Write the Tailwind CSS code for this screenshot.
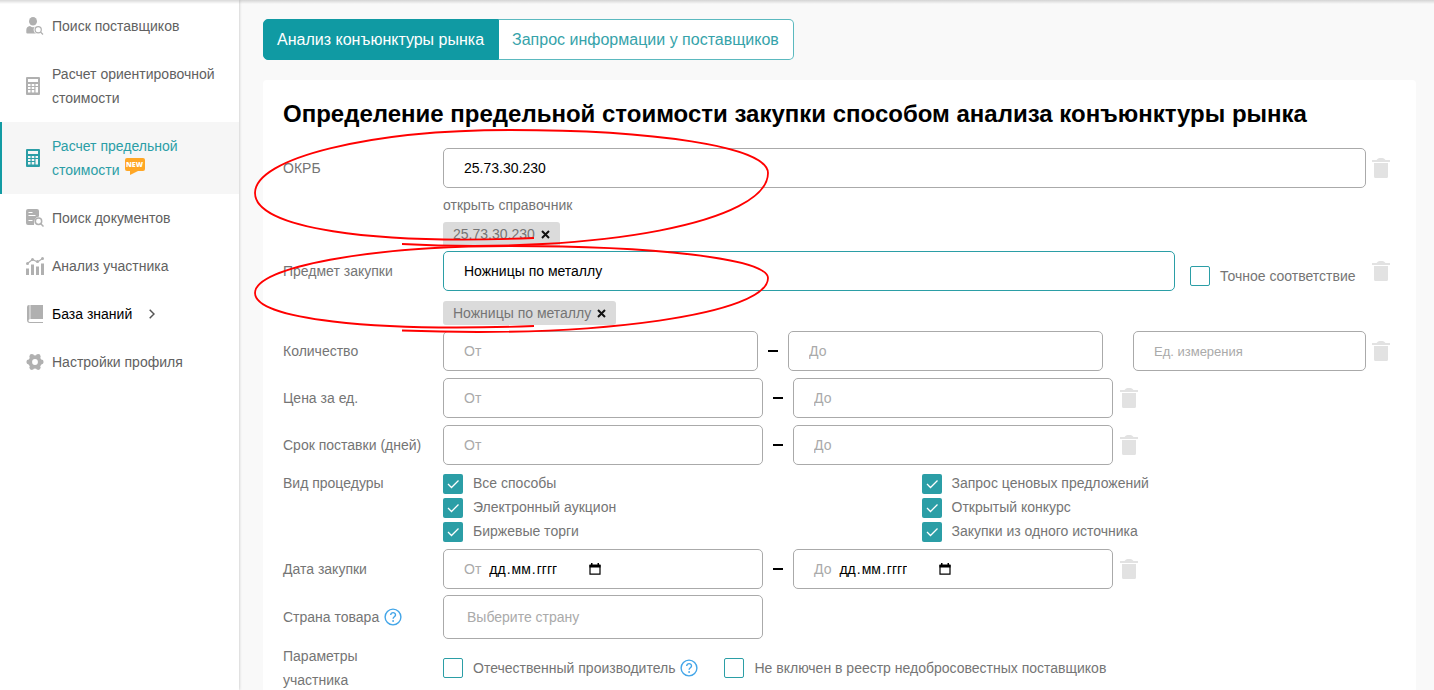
<!DOCTYPE html>
<html lang="ru">
<head>
<meta charset="utf-8">
<title>Расчет предельной стоимости</title>
<script src="https://cdn.jsdelivr.net/npm/@tailwindcss/browser@4"></script>
</head>
<body class="relative h-screen overflow-hidden bg-[#f9f9f9] font-['Liberation_Sans',Arial,sans-serif] text-sm leading-6 text-[#757575]">
<svg class="absolute size-0" aria-hidden="true">
  <symbol id="trash" viewBox="0 0 18 20"><path fill="#e2e2e2" d="M0 2h4.500Q6 0 7.500 0h3Q12 0 13.500 2H18v2H0zM2 5h14v13.500q0 1.500-1.500 1.500h-11Q2 20 2 18.500z"/></symbol>
  <symbol id="calc" viewBox="0 0 14 18"><path fill="currentColor" fill-rule="evenodd" d="M1 0h12q1 0 1 1v16q0 1-1 1H1q-1 0-1-1V1q0-1 1-1zM2 2v3h10V2zM2 7v2h2.500V7zm3.700 0v2h2.600V7zm3.800 0v2H12V7zM2 10v2h2.500v-2zm3.700 0v2h2.600v-2zM2 13v2.500h2.500V13zm3.700 0v2.500h2.600V13zm3.800-3v5.500H12V10z"/></symbol>
  <symbol id="help" viewBox="0 0 18 18"><circle cx="9" cy="9" r="7.900" fill="none" stroke="#42a5e8" stroke-width="1.400"/><path d="M6.700 7.100C6.700 3.800 11.600 3.900 11.500 7 11.500 8.700 9.100 8.800 9.100 10.700" fill="none" stroke="#42a5e8" stroke-width="1.400"/><circle cx="9.100" cy="13" r=".9" fill="#42a5e8"/></symbol>
</svg>
<div class="absolute inset-x-0 top-0 z-20 h-1 bg-gradient-to-b from-black/15 to-transparent"></div>
<div class="flex h-full">
  <nav class="relative z-10 w-[239px] shrink-0 bg-white pt-0.5 shadow-[0_0_3px_rgba(0,0,0,0.25)]">
    <a href="#" class="flex h-12 items-center pl-[26px] text-[#616161]">
      <svg class="mr-2 h-[18px] w-[18px] shrink-0" viewBox="0 0 18 18" fill="#b0b0b0"><ellipse cx="7" cy="4.300" rx="4" ry="4.300"/><path d="M.3 15.500V13Q.3 9.500 4 9q3 2.500 6 0l3 1v6.500H1.300Q.3 16.500.3 15.500Z"/><circle cx="12.200" cy="12.800" r="3.100" fill="#fff" stroke="#fff" stroke-width="3"/><circle cx="12.200" cy="12.800" r="3.100" fill="#fff" stroke="#b0b0b0" stroke-width="1.200"/><path d="m14.500 15 2.500 2.500" stroke="#b0b0b0" stroke-width="1.300"/></svg>Поиск поставщиков</a>
    <a href="#" class="flex h-[72px] items-center pl-[26px] text-[#616161]">
      <svg class="mr-3 h-[18px] w-3.5 shrink-0 text-[#b0b0b0]"><use href="#calc"/></svg><span>Расчет ориентировочной<br>стоимости</span></a>
    <a href="#" class="flex h-[72px] items-center border-l-2 border-[#129ba3] bg-[#f6f6f6] pl-6 text-[#2b9ea6]">
      <svg class="mr-3 h-[18px] w-3.5 shrink-0"><use href="#calc"/></svg>
      <span>Расчет предельной
        <span class="flex items-start gap-[5px]">стоимости
          <span class="relative h-[13px] w-5 rounded-xs bg-[#ffa726] text-center font-['Open_Sans',sans-serif] text-[7px] leading-[13px] font-extrabold text-white">NEW<svg class="absolute top-[13px] left-[5px] h-1 w-2" viewBox="0 0 8 4"><path d="M0 0h8L0 4z" fill="#ffa726"/></svg></span></span></span></a>
    <a href="#" class="flex h-12 items-center pl-[26px] text-[#616161]">
      <svg class="mr-2 h-[18px] w-[18px] shrink-0" viewBox="0 0 18 18"><path fill="#b0b0b0" d="M2 0h9q2 0 2 2v5.500Q7.500 8 8 16H2q-2 0-2-2V2Q0 0 2 0z"/><path d="M2.500 3.500h4m-4 3h7m-7 5h4" stroke="#fff" stroke-width="1.200"/><circle cx="12.500" cy="12.300" r="3.200" fill="#fff" stroke="#b0b0b0" stroke-width="1.500"/><path d="m14.800 14.700 2.700 2.800" stroke="#b0b0b0" stroke-width="1.500"/></svg>Поиск документов</a>
    <a href="#" class="flex h-12 items-center pl-[26px] text-[#616161]">
      <svg class="mr-2 h-[18px] w-[18px] shrink-0" viewBox="0 0 18 18" fill="#b0b0b0"><path d="M0 11.500h3V18H0zM5 7.500h3V18H5zM10 9.500h3V18h-3zM15 6.500h3V18h-3z"/><path d="m1.500 6.500 5-4 5 2.500 5-3.500" fill="none" stroke="#b0b0b0" stroke-width="1.200"/><circle cx="1.500" cy="6.500" r="1.500"/><circle cx="6.500" cy="2.500" r="1.500"/><circle cx="11.500" cy="4.500" r="1.500"/><circle cx="16.500" cy="1.500" r="1.500"/></svg>Анализ участника</a>
    <a href="#" class="flex h-12 items-center pl-[26px] text-black">
      <svg class="mr-2 h-[18px] w-[18px] shrink-0" viewBox="0 0 18 18"><path fill="#b0b0b0" d="M3 0h14v14H4q-1.500 0-1.500 1.500T4 17h13v1H4q-3 0-3-3V2q0-2 2-2z"/><path d="M4 0v14" stroke="#fff" stroke-width=".8"/></svg>База знаний
      <svg class="ml-[17px] h-2.5 w-1.5" viewBox="0 0 6 10"><path d="m.7.7 4.300 4.300L.7 9.300" fill="none" stroke="#555" stroke-width="1.500"/></svg></a>
    <a href="#" class="flex h-12 items-center pl-[26px] text-[#616161]">
      <svg class="mr-2 h-[18px] w-[18px] shrink-0" viewBox="0 0 18 18" fill="#b0b0b0"><circle cx="9" cy="9" r="6.700"/><circle cx="5.800" cy="3.500" r="2.400"/><circle cx="12.200" cy="3.500" r="2.400"/><circle cx="2.800" cy="9" r="2.400"/><circle cx="15.200" cy="9" r="2.400"/><circle cx="5.800" cy="14.500" r="2.400"/><circle cx="12.200" cy="14.500" r="2.400"/><circle cx="9" cy="9" r="2.900" fill="#fff"/></svg>Настройки профиля</a>
  </nav>

  <main class="min-w-0 flex-1 pt-[19px] pr-[18px] pl-6">
    <div class="mb-5 flex h-[41px] w-max text-base">
      <button class="rounded-l-[5px] border border-[#109aa3] bg-[#109aa3] pr-3.5 pl-[13px] text-white">Анализ конъюнктуры рынка</button>
      <button class="rounded-r-[5px] border border-l-0 border-[#5bb9bf] bg-white pr-3.5 pl-[13px] text-[#36a3aa]">Запрос информации у поставщиков</button>
    </div>
    <form class="h-[640px] rounded-t-sm bg-white px-5 pt-[17px]">
      <h1 class="mb-[17px] text-2xl leading-[34px] font-bold whitespace-nowrap text-black">Определение предельной стоимости закупки способом анализа конъюнктуры рынка</h1>

      <div class="flex h-[103px] items-start pr-1.5">
        <label for="okrb" class="w-40 shrink-0 leading-10">ОКРБ</label>
        <div class="flex-1">
          <input id="okrb" value="25.73.30.230" class="block h-10 w-full rounded-[5px] border border-[#aaa] px-5 text-black outline-none">
          <a href="#" class="mt-[5px] block w-max">открыть справочник</a>
          <span class="mt-[5px] flex h-6 w-max items-center rounded-t-[3px] bg-[#dbdbdb] px-2.5">25.73.30.230
            <button type="button" aria-label="Удалить" class="ml-1.5"><svg class="size-[9px]" viewBox="0 0 9 9"><path d="m1 1 7 7M8 1 1 8" stroke="#111" stroke-width="2"/></svg></button></span>
        </div>
        <button type="button" aria-label="Очистить" class="mt-2.5 ml-1.5"><svg class="h-5 w-[18px]"><use href="#trash"/></svg></button>
      </div>

      <div class="flex h-20 items-start pr-1.5">
        <label for="item" class="w-40 shrink-0 leading-10">Предмет закупки</label>
        <div class="flex-1">
          <input id="item" value="Ножницы по металлу" class="block h-10 w-full rounded-[5px] border border-[#2b9ea6] px-5 text-black outline-none">
          <span class="mt-2.5 flex h-6 w-max items-center rounded-[3px] bg-[#dbdbdb] px-2.5">Ножницы по металлу
            <button type="button" aria-label="Удалить" class="ml-1.5"><svg class="size-[9px]" viewBox="0 0 9 9"><path d="m1 1 7 7M8 1 1 8" stroke="#111" stroke-width="2"/></svg></button></span>
        </div>
        <label class="mt-[13px] ml-[15px] flex w-[176px] items-center gap-2.5"><input type="checkbox" class="size-5 appearance-none rounded-xs border border-[#2b9ea6]">Точное соответствие</label>
        <button type="button" aria-label="Очистить" class="mt-2.5 ml-1.5"><svg class="h-5 w-[18px]"><use href="#trash"/></svg></button>
      </div>

      <div class="mb-[7px] flex items-center pr-1.5">
        <label for="q1" class="w-40 shrink-0">Количество</label>
        <input id="q1" placeholder="От" class="h-10 min-w-0 flex-1 rounded-[5px] border border-[#aaa] px-5 placeholder:text-[#aaa]">
        <span class="mx-2.5 h-0.5 w-2.5 bg-black"></span>
        <input aria-label="Количество до" placeholder="До" class="h-10 min-w-0 flex-1 rounded-[5px] border border-[#aaa] px-5 placeholder:text-[#aaa]">
        <input aria-label="Единица измерения" placeholder="Ед. измерения" class="ml-[30px] h-10 w-[233px] rounded-[5px] border border-[#aaa] px-5 text-[13px] placeholder:text-[#aaa]">
        <button type="button" aria-label="Очистить" class="ml-1.5"><svg class="h-5 w-[18px]"><use href="#trash"/></svg></button>
      </div>

      <div class="mb-[7px] flex items-center">
        <label for="p1" class="w-40 shrink-0">Цена за ед.</label>
        <input id="p1" placeholder="От" class="h-10 w-80 rounded-[5px] border border-[#aaa] px-5 placeholder:text-[#aaa]">
        <span class="mx-2.5 h-0.5 w-2.5 bg-black"></span>
        <input aria-label="Цена до" placeholder="До" class="h-10 w-80 rounded-[5px] border border-[#aaa] px-5 placeholder:text-[#aaa]">
        <button type="button" aria-label="Очистить" class="ml-[7px]"><svg class="h-5 w-[18px]"><use href="#trash"/></svg></button>
      </div>

      <div class="mb-1.5 flex items-center">
        <label for="t1" class="w-40 shrink-0">Срок поставки (дней)</label>
        <input id="t1" placeholder="От" class="h-10 w-80 rounded-[5px] border border-[#aaa] px-5 placeholder:text-[#aaa]">
        <span class="mx-2.5 h-0.5 w-2.5 bg-black"></span>
        <input aria-label="Срок до" placeholder="До" class="h-10 w-80 rounded-[5px] border border-[#aaa] px-5 placeholder:text-[#aaa]">
        <button type="button" aria-label="Очистить" class="ml-[7px]"><svg class="h-5 w-[18px]"><use href="#trash"/></svg></button>
      </div>

      <fieldset class="mb-1.5 flex">
        <span class="w-40 shrink-0">Вид процедуры</span>
        <div class="grid flex-1 grid-cols-2 gap-x-1">
          <label class="flex items-center gap-2.5"><span class="relative mt-px size-5"><input type="checkbox" checked class="block size-5 appearance-none rounded-xs bg-[#2b9ea6]"><svg class="pointer-events-none absolute inset-0" viewBox="0 0 20 20"><path d="m5 10 3.500 3.500L15.500 6.500" fill="none" stroke="#fff" stroke-width="1.300"/></svg></span>Все способы</label>
          <label class="flex items-center gap-2.5"><span class="relative mt-px size-5"><input type="checkbox" checked class="block size-5 appearance-none rounded-xs bg-[#2b9ea6]"><svg class="pointer-events-none absolute inset-0" viewBox="0 0 20 20"><path d="m5 10 3.500 3.500L15.500 6.500" fill="none" stroke="#fff" stroke-width="1.300"/></svg></span>Запрос ценовых предложений</label>
          <label class="flex items-center gap-2.5"><span class="relative mt-px size-5"><input type="checkbox" checked class="block size-5 appearance-none rounded-xs bg-[#2b9ea6]"><svg class="pointer-events-none absolute inset-0" viewBox="0 0 20 20"><path d="m5 10 3.500 3.500L15.500 6.500" fill="none" stroke="#fff" stroke-width="1.300"/></svg></span>Электронный аукцион</label>
          <label class="flex items-center gap-2.5"><span class="relative mt-px size-5"><input type="checkbox" checked class="block size-5 appearance-none rounded-xs bg-[#2b9ea6]"><svg class="pointer-events-none absolute inset-0" viewBox="0 0 20 20"><path d="m5 10 3.500 3.500L15.500 6.500" fill="none" stroke="#fff" stroke-width="1.300"/></svg></span>Открытый конкурс</label>
          <label class="flex items-center gap-2.5"><span class="relative mt-px size-5"><input type="checkbox" checked class="block size-5 appearance-none rounded-xs bg-[#2b9ea6]"><svg class="pointer-events-none absolute inset-0" viewBox="0 0 20 20"><path d="m5 10 3.500 3.500L15.500 6.500" fill="none" stroke="#fff" stroke-width="1.300"/></svg></span>Биржевые торги</label>
          <label class="flex items-center gap-2.5"><span class="relative mt-px size-5"><input type="checkbox" checked class="block size-5 appearance-none rounded-xs bg-[#2b9ea6]"><svg class="pointer-events-none absolute inset-0" viewBox="0 0 20 20"><path d="m5 10 3.500 3.500L15.500 6.500" fill="none" stroke="#fff" stroke-width="1.300"/></svg></span>Закупки из одного источника</label>
        </div>
      </fieldset>

      <div class="mb-1.5 flex items-center">
        <label for="d1" class="w-40 shrink-0">Дата закупки</label>
        <div class="flex h-10 w-80 items-center rounded-[5px] border border-[#aaa] px-5 text-[#aaa]">От
          <span class="ml-[7px] flex w-[101px] text-black"><input id="d1" aria-label="День от" placeholder="дд" class="field-sizing-content px-px placeholder:text-black">.<input aria-label="Месяц от" placeholder="мм" class="field-sizing-content px-px placeholder:text-black">.<input aria-label="Год от" placeholder="гггг" class="field-sizing-content px-px placeholder:text-black"></span>
          <button type="button" aria-label="Открыть календарь"><svg class="h-3 w-3" viewBox="0 0 12 12"><path d="M1 2.500h10v8.700H1z" fill="none" stroke="#000" stroke-width="1.200"/><path d="M.5 1.500h11V4.500H.5zM2 0h1.500v2H2zM8.500 0H10v2H8.500z"/></svg></button></div>
        <span class="mx-2.5 h-0.5 w-2.5 bg-black"></span>
        <div class="flex h-10 w-80 items-center rounded-[5px] border border-[#aaa] px-5 text-[#aaa]">До
          <span class="ml-[7px] flex w-[101px] text-black"><input aria-label="День до" placeholder="дд" class="field-sizing-content px-px placeholder:text-black">.<input aria-label="Месяц до" placeholder="мм" class="field-sizing-content px-px placeholder:text-black">.<input aria-label="Год до" placeholder="гггг" class="field-sizing-content px-px placeholder:text-black"></span>
          <button type="button" aria-label="Открыть календарь"><svg class="h-3 w-3" viewBox="0 0 12 12"><path d="M1 2.500h10v8.700H1z" fill="none" stroke="#000" stroke-width="1.200"/><path d="M.5 1.500h11V4.500H.5zM2 0h1.500v2H2zM8.500 0H10v2H8.500z"/></svg></button></div>
        <button type="button" aria-label="Очистить" class="ml-[7px]"><svg class="h-5 w-[18px]"><use href="#trash"/></svg></button>
      </div>

      <div class="mb-[5px] flex items-center">
        <label for="country" class="flex w-40 shrink-0 items-center gap-[5px]">Страна товара<svg class="size-[18px]"><use href="#help"/></svg></label>
        <select id="country" class="h-11 w-80 appearance-none rounded-[5px] border border-[#aaa] px-[23px] text-[#aaa]"><option>Выберите страну</option></select>
      </div>

      <fieldset class="flex items-center">
        <span class="w-40 shrink-0">Параметры<br>участника</span>
        <label class="flex items-center gap-2.5"><input type="checkbox" class="size-5 appearance-none rounded-xs border border-[#2b9ea6]">Отечественный производитель</label>
        <svg class="mr-[26px] ml-[5px] size-[18px]"><use href="#help"/></svg>
        <label class="flex items-center gap-2.5"><input type="checkbox" class="size-5 appearance-none rounded-xs border border-[#2b9ea6]">Не включен в реестр недобросовестных поставщиков</label>
      </fieldset>
    </form>
  </main>
</div>
<svg class="pointer-events-none absolute top-0 left-0 z-30" width="800" height="350" fill="none" stroke="#f00" stroke-width="1.800" aria-hidden="true">
  <path d="M402 244C600 254 768 222 768 173C768 146 650 130 510 130C370 130 255 158 255 193C255 228 370 245 534 238"/>
  <path d="M402 330.500C600 338 768 314 768 278C768 258 650 246 510 246C370 246 255 267 255 293C255 319 370 332 534 326"/>
</svg>
</body>
</html>
